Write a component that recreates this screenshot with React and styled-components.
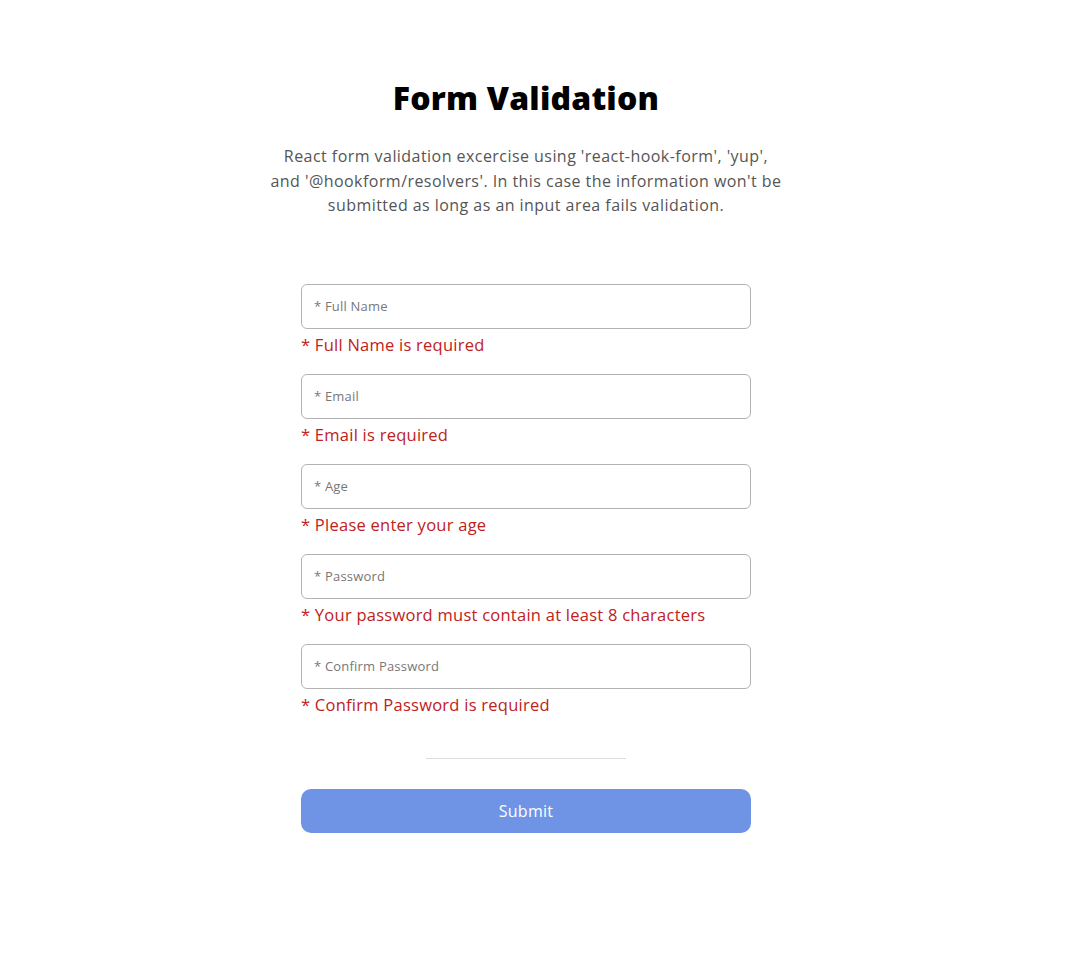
import React from 'react';
import styled, { createGlobalStyle } from 'styled-components';

const GlobalStyle = createGlobalStyle`
  html, body {
    margin: 0;
    padding: 0;
    background: #ffffff;
  }
  body {
    font-family: 'Open Sans', 'Liberation Sans', sans-serif;
  }
`;

const S = {
  Page: styled.div`
    width: 1052px;
    display: flex;
    flex-direction: column;
    align-items: center;
    padding-top: 74px;
  `,
  Title: styled.h1`
    margin: 0;
    font-size: 32px;
    line-height: 48px;
    font-weight: 800;
    color: #000000;
    letter-spacing: 0.2px;
  `,
  Intro: styled.p`
    margin: 22px 0 0;
    width: 560px;
    font-size: 16px;
    line-height: 24.5px;
    letter-spacing: 0.45px;
    text-align: center;
    color: #555555;
  `,
  Form: styled.form`
    width: 450px;
    margin-top: 66px;
    display: flex;
    flex-direction: column;
  `,
  Field: styled.div`
    display: flex;
    flex-direction: column;
    margin-bottom: 17px;
  `,
  Input: styled.input`
    box-sizing: border-box;
    height: 45px;
    width: 100%;
    padding: 0 12px;
    border: 1px solid #b3b3b3;
    border-radius: 6px;
    font-family: inherit;
    font-size: 13px;
    letter-spacing: 0.2px;
    color: #333;
    outline: none;
    &::placeholder {
      color: #777777;
    }
  `,
  Error: styled.span`
    margin-top: 4px;
    font-size: 16.5px;
    line-height: 24px;
    letter-spacing: 0.25px;
    color: #c0211b;
  `,
  Divider: styled.hr`
    width: 200px;
    margin: 24px auto 30px;
    border: none;
    border-top: 1px solid #dcdcdc;
  `,
  Submit: styled.button`
    height: 44px;
    width: 100%;
    border: none;
    border-radius: 10px;
    background: #6f94e6;
    color: #ffffff;
    font-family: inherit;
    font-size: 16px;
    font-weight: 500;
    letter-spacing: 0.3px;
    cursor: pointer;
  `,
};

const fields = [
  { name: 'fullName', type: 'text', placeholder: '* Full Name', error: '* Full Name is required' },
  { name: 'email', type: 'email', placeholder: '* Email', error: '* Email is required' },
  { name: 'age', type: 'text', placeholder: '* Age', error: '* Please enter your age' },
  { name: 'password', type: 'password', placeholder: '* Password', error: '* Your password must contain at least 8 characters' },
  { name: 'confirmPassword', type: 'password', placeholder: '* Confirm Password', error: '* Confirm Password is required' },
];

const App = () => (
  <S.Page>
    <GlobalStyle />
    <S.Title>Form Validation</S.Title>
    <S.Intro>
      React form validation excercise using 'react-hook-form', 'yup',
      <br />
      and '@hookform/resolvers'. In this case the information won't be
      <br />
      submitted as long as an input area fails validation.
    </S.Intro>
    <S.Form onSubmit={e => e.preventDefault()}>
      {fields.map(f => (
        <S.Field key={f.name}>
          <S.Input name={f.name} type={f.type} placeholder={f.placeholder} />
          <S.Error>{f.error}</S.Error>
        </S.Field>
      ))}
      <S.Divider />
      <S.Submit type="submit">Submit</S.Submit>
    </S.Form>
  </S.Page>
);

export default App;
